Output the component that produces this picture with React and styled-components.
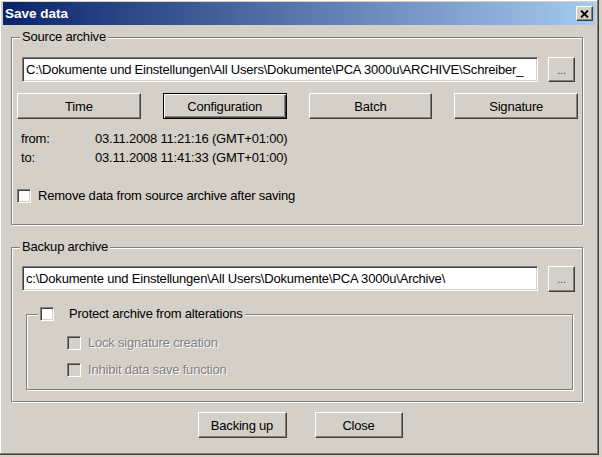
import React from 'react';
import styled, { createGlobalStyle } from 'styled-components';

const GlobalStyle = createGlobalStyle`
  html, body {
    margin: 0;
    padding: 0;
    background: #d4d0c8;
  }
  body {
    font-family: "Liberation Sans", Arial, sans-serif;
    font-size: 13px;
    letter-spacing: -0.2px;
  }
`;

const Window = styled.div`
  box-sizing: border-box;
  width: 599px;
  height: 455px;
  padding: 2px 3px 3px 3px;
  display: flex;
  flex-direction: column;
  background: #d4d0c8;
  border-right: 1px solid #404040;
  border-bottom: 1px solid #404040;
  box-shadow: inset -1px -1px 0 #808080, inset 1px 1px 0 #fff;
  color: #000;
`;

const TitleBar = styled.div`
  height: 23px;
  display: flex;
  align-items: center;
  justify-content: space-between;
  padding: 0 2px 0 2px;
  background: linear-gradient(to right, #0a246a, #a6caf0);
  color: #fff;
  font-weight: bold;
  font-size: 13.5px;
  letter-spacing: 0;
`;

const CloseBox = styled.div`
  box-sizing: border-box;
  width: 17px;
  height: 15px;
  display: flex;
  align-items: center;
  justify-content: center;
  background: #d4d0c8;
  border: 1px solid;
  border-color: #fff #404040 #404040 #fff;
  box-shadow: inset -1px -1px 0 #808080;
`;

const Body = styled.div`
  display: flex;
  flex-direction: column;
  padding: 4px 12px 0 8px;
`;

const Group = styled.fieldset`
  margin: ${(p) => p.$margin || '0'};
  padding: ${(p) => p.$pad};
  border: 1px solid #808080;
  box-shadow: 1px 1px 0 #fff, inset 1px 1px 0 #fff;
  min-width: 0;
  display: flex;
  flex-direction: column;
`;

const Legend = styled.legend`
  padding: 0 2px;
  margin-left: ${(p) => p.$indent || '2px'};
  line-height: 16px;
  background: #d4d0c8;
  display: flex;
  align-items: center;
  gap: 15px;
`;

const PathRow = styled.div`
  display: flex;
  gap: 10px;
  margin-right: -1px;
`;

const PathInput = styled.div`
  box-sizing: border-box;
  flex: 1;
  height: 25px;
  margin-left: 4px;
  padding: 0 3px;
  display: flex;
  align-items: center;
  background: #fff;
  white-space: nowrap;
  overflow: hidden;
  border: 1px solid;
  border-color: #808080 #fff #fff #808080;
  box-shadow: inset 1px 1px 0 #404040, inset -1px -1px 0 #d4d0c8;
`;

const Button = styled.div`
  box-sizing: border-box;
  height: ${(p) => p.$h || '26px'};
  width: ${(p) => p.$w || 'auto'};
  display: flex;
  align-items: center;
  justify-content: center;
  background: #d4d0c8;
  border: 1px solid;
  border-color: ${(p) => (p.$default ? '#000' : '#fff #404040 #404040 #fff')};
  box-shadow: ${(p) =>
    p.$default
      ? 'inset 1px 1px 0 #fff, inset -1px -1px 0 #404040, inset -2px -2px 0 #808080'
      : 'inset -1px -1px 0 #808080'};
  color: ${(p) => (p.$dim ? '#404040' : '#000')};
  font-size: ${(p) => (p.$dim ? '11px' : '13px')};
`;

const ButtonGrid = styled.div`
  display: grid;
  grid-template-columns: repeat(4, 1fr);
  column-gap: 22px;
  margin: 11px -4px 0 -1px;
`;

const InfoTable = styled.div`
  display: grid;
  grid-template-columns: 74px 1fr;
  line-height: 19px;
  margin: 10px 0 0 3px;
`;

const CheckRow = styled.label`
  display: flex;
  align-items: center;
  gap: ${(p) => p.$gap || '7px'};
  height: ${(p) => p.$h || '19px'};
  margin: ${(p) => p.$margin || '0'};
  color: ${(p) => (p.$disabled ? '#808080' : '#000')};
  text-shadow: ${(p) => (p.$disabled ? '1px 1px 0 #fff' : 'none')};
`;

const Box = styled.span`
  box-sizing: border-box;
  width: 14px;
  height: 14px;
  flex: none;
  background: ${(p) => (p.$disabled ? '#d4d0c8' : '#fff')};
  border: 1px solid;
  border-color: #808080 #fff #fff #808080;
  box-shadow: inset 1px 1px 0 #404040, inset -1px -1px 0 #d4d0c8;
`;

const Footer = styled.div`
  display: flex;
  justify-content: center;
  gap: 28px;
  margin-top: 10px;
  padding-left: 6px;
`;

const CloseIcon = () => (
  <svg width="9" height="8" viewBox="0 0 9 8">
    <path d="M1 0.5 L8 7.5 M8 0.5 L1 7.5" stroke="#000" strokeWidth="1.8" />
  </svg>
);

export default function App() {
  return (
    <>
      <GlobalStyle />
      <Window>
        <TitleBar>
          <span>Save data</span>
          <CloseBox>
            <CloseIcon />
          </CloseBox>
        </TitleBar>
        <Body>
          <Group $pad="12px 8px 19px 6px">
            <Legend>Source archive</Legend>
            <PathRow>
              <PathInput>
                C:\Dokumente und Einstellungen\All Users\Dokumente\PCA 3000u\ARCHIVE\Schreiber_
              </PathInput>
              <Button $w="27px" $h="25px" $dim>...</Button>
            </PathRow>
            <ButtonGrid>
              <Button>Time</Button>
              <Button $default>Configuration</Button>
              <Button>Batch</Button>
              <Button>Signature</Button>
            </ButtonGrid>
            <InfoTable>
              <span>from:</span>
              <span>03.11.2008 11:21:16 (GMT+01:00)</span>
              <span>to:</span>
              <span>03.11.2008 11:41:33 (GMT+01:00)</span>
            </InfoTable>
            <CheckRow $margin="19px 0 0 -1px">
              <Box />
              <span>Remove data from source archive after saving</span>
            </CheckRow>
          </Group>

          <Group $pad="11px 8px 11px 6px" $margin="14px 0 0 0">
            <Legend>Backup archive</Legend>
            <PathRow>
              <PathInput>
                c:\Dokumente und Einstellungen\All Users\Dokumente\PCA 3000u\Archive\
              </PathInput>
              <Button $w="27px" $h="26px" $dim>...</Button>
            </PathRow>
            <Group $pad="7px 8px 6px 0" $margin="14px 1px 0 8px">
              <Legend $indent="11px">
                <Box />
                <span>Protect archive from alterations</span>
              </Legend>
              <CheckRow $disabled $h="27px" $margin="0 0 0 40px">
                <Box $disabled />
                <span>Lock signature creation</span>
              </CheckRow>
              <CheckRow $disabled $h="27px" $margin="0 0 0 40px">
                <Box $disabled />
                <span>Inhibit data save function</span>
              </CheckRow>
            </Group>
          </Group>

          <Footer>
            <Button $w="89px">Backing up</Button>
            <Button $w="88px">Close</Button>
          </Footer>
        </Body>
      </Window>
    </>
  );
}
